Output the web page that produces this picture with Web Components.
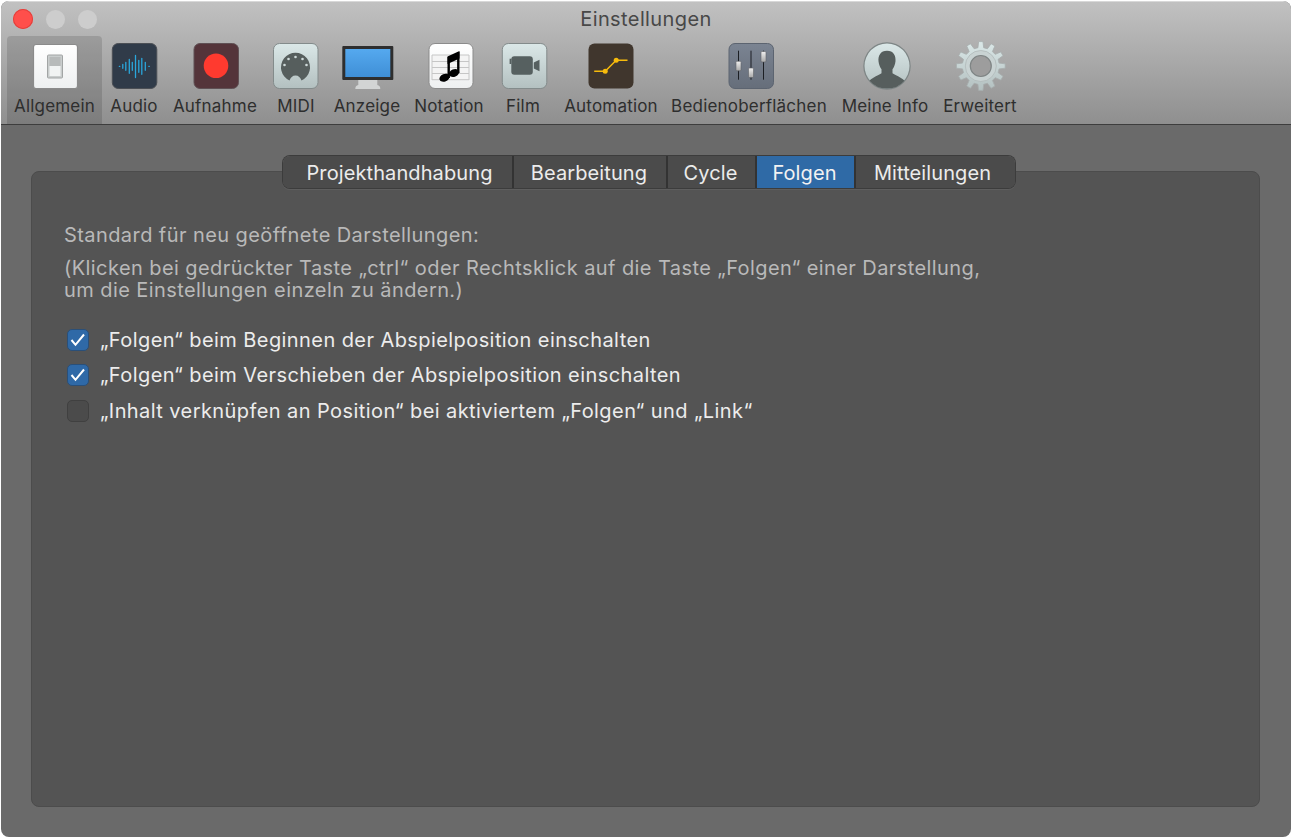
<!DOCTYPE html>
<html lang="de">
<head>
<meta charset="utf-8">
<title>Einstellungen</title>
<style>
    html, body { margin: 0; height: 100%; background: #fff; }
    body { font-family: Inter, "Liberation Sans", sans-serif; overflow: hidden; }
</style>
</head>
<body>
<pref-window heading="Einstellungen">
    <pref-tool slot="tools" label="Allgemein" w="95" active><pref-icon name="general" dx="-0.5"></pref-icon></pref-tool>
    <pref-tool slot="tools" label="Audio" w="64"><pref-icon name="audio" dx="0.3"></pref-icon></pref-tool>
    <pref-tool slot="tools" label="Aufnahme" w="98"><pref-icon name="record" dx="1"></pref-icon></pref-tool>
    <pref-tool slot="tools" label="MIDI" w="64"><pref-icon name="midi" dx="-0.5"></pref-icon></pref-tool>
    <pref-tool slot="tools" label="Anzeige" w="78"><pref-icon name="display" dx="1.3"></pref-icon></pref-tool>
    <pref-tool slot="tools" label="Notation" w="86"><pref-icon name="notation" dx="2"></pref-icon></pref-tool>
    <pref-tool slot="tools" label="Film" w="62"><pref-icon name="film" dx="1.3"></pref-icon></pref-tool>
    <pref-tool slot="tools" label="Automation" w="114"><pref-icon name="automation"></pref-icon></pref-tool>
    <pref-tool slot="tools" label="Bedienoberflächen" w="162"><pref-icon name="mixer" dx="2"></pref-icon></pref-tool>
    <pref-tool slot="tools" label="Meine Info" w="110"><pref-icon name="user" dx="1.5"></pref-icon></pref-tool>
    <pref-tool slot="tools" label="Erweitert" w="80"><pref-icon name="gear" dx="0.3"></pref-icon></pref-tool>

    <pref-tabs slot="tabs">
        <pref-tab w="231">Projekthandhabung</pref-tab>
        <pref-tab w="154">Bearbeitung</pref-tab>
        <pref-tab w="89">Cycle</pref-tab>
        <pref-tab w="99" selected>Folgen</pref-tab>
        <pref-tab w="159">Mitteilungen</pref-tab>
    </pref-tabs>

    <pref-panel>
        <span slot="title">Standard für neu geöffnete Darstellungen:</span>
        <span slot="note">(Klicken bei gedrückter Taste „ctrl“ oder Rechtsklick auf die Taste „Folgen“ einer Darstellung,<br>um die Einstellungen einzeln zu ändern.)</span>
        <pref-check checked>„Folgen“ beim Beginnen der Abspielposition einschalten</pref-check>
        <pref-check checked>„Folgen“ beim Verschieben der Abspielposition einschalten</pref-check>
        <pref-check>„Inhalt verknüpfen an Position“ bei aktiviertem „Folgen“ und „Link“</pref-check>
    </pref-panel>
</pref-window>

<script>
// gear outline, 12 teeth
function gearPath(cx, cy, rOut, rIn, teeth) {
    let d = '';
    const step = Math.PI * 2 / teeth;
    for (let i = 0; i < teeth; i++) {
        const a = i * step - Math.PI / 2;
        const pts = [
            [rIn, a - step * 0.30], [rOut, a - step * 0.17],
            [rOut, a + step * 0.17], [rIn, a + step * 0.30]
        ];
        pts.forEach((p, j) => {
            const x = (cx + p[0] * Math.cos(p[1])).toFixed(2);
            const y = (cy + p[0] * Math.sin(p[1])).toFixed(2);
            d += (i === 0 && j === 0 ? 'M' : 'L') + x + ' ' + y;
        });
    }
    return d + 'Z';
}

const ICONS = {
    general: `
        <rect x="1.5" y="2.5" width="44" height="44" rx="2.5" fill="url(#w)" stroke="#8b8b8b" stroke-width="1.2"/>
        <rect x="15.500" y="13" width="15" height="23" rx="1" fill="#c9cdcd" stroke="#a2a5a5"/>
        <rect x="17.500" y="15" width="11" height="9" fill="#b7baba"/>
        <rect x="17.500" y="24" width="11" height="10" fill="#f1f3f3"/>`,
    audio: `
        <rect x="0.5" y="1.5" width="44.5" height="45" rx="6" fill="#303b49" stroke="#4b4f55"/>
        <g stroke="#2aa7dc" stroke-width="1.3" stroke-linecap="round">
            <path d="M7.500 24.300h.5M11 22.300v4M14 20.300v8M17.500 17.300v14M20.500 20.300v8M23.700 13.500v22M27 18.300v12M30 16.300v16M33.500 20.300v8M37 24.300h.5"/>
        </g>`,
    record: `
        <rect x="0.5" y="1.5" width="44.5" height="45" rx="6" fill="#54343a" stroke="#5f5054"/>
        <circle cx="22.5" cy="23.700" r="12.300" fill="#ff3a2f"/>`,
    midi: `
        <rect x="0.5" y="1.5" width="44.5" height="45" rx="6" fill="url(#t)" stroke="#838b8b"/>
        <path d="M16.500 38.500A14.500 14.500 0 1 1 28.500 38.500C27.500 35.500 25.500 33.500 22.500 33.500S17.500 35.500 16.500 38.500z" fill="#565e5d"/>
        <g fill="#cfdada"><circle cx="22.500" cy="15" r="1.300"/><circle cx="15.500" cy="17" r="1.300"/><circle cx="29.500" cy="17" r="1.300"/><circle cx="11.500" cy="23" r="1.300"/><circle cx="33.500" cy="23" r="1.300"/></g>`,
    display: `
        <path d="M16 38h19v5c2 .6 3 1.200 3 4H13c0-2.800 1-3.400 3-4z" fill="#d2d4d4"/>
        <rect x="0" y="4" width="51" height="34" rx="1" fill="#2e2e2e"/>
        <rect x="3" y="7" width="45" height="28" fill="url(#b)"/>`,
    notation: `
        <rect x="0.5" y="1.5" width="44" height="45" rx="6" fill="url(#w)" stroke="#8b8b8b"/>
        <rect x="3.5" y="13" width="37" height="25" fill="#f4f4f4"/>
        <path d="M3.500 13h37M3.500 19.500h37M3.500 25.500h37M3.500 31.500h37M3.500 37.700h37M3.500 13v25M40.500 13v25" stroke="#c6c6c6" fill="none"/>
        <path d="M19 14.500L31 9V16.500L19 22z"/>
        <path d="M20.200 15v21M29.800 10v21" stroke="#000" stroke-width="2.400"/>
        <ellipse cx="16" cy="35.700" rx="5.300" ry="3.700" transform="rotate(-22 16 35.700)"/>
        <ellipse cx="25.600" cy="31" rx="5.300" ry="3.700" transform="rotate(-22 25.600 31)"/>`,
    film: `
        <rect x="0.5" y="1.5" width="44.5" height="45" rx="6" fill="url(#t)" stroke="#838b8b"/>
        <rect x="9.500" y="14.300" width="21.500" height="18.400" rx="3" fill="#566060"/>
        <path d="M32 20.500L37.700 17.700V29.300L32 26.500z" fill="#566060"/>
        <rect x="7.800" y="16.700" width="1.700" height="5.300" fill="#566060"/>`,
    automation: `
        <rect x="0" y="1.500" width="45" height="45" rx="6" fill="#40362d"/>
        <path d="M5.700 29.300h11l11-11h11.300" fill="none" stroke="#f7bb0c" stroke-width="1.500"/>
        <circle cx="16.700" cy="29.300" r="2.500" fill="#f7bb0c"/>
        <circle cx="27.700" cy="18.300" r="2.500" fill="#f7bb0c"/>`,
    mixer: `
        <rect x="0.5" y="1.5" width="44.500" height="45" rx="6" fill="url(#m)" stroke="#5c6470"/>
        <path d="M10 8.700v29M22.500 8.700v29M35 8.700v29" stroke="#1c1f24"/>
        <g fill="url(#k)" stroke="#5f6368" stroke-width=".6">
            <rect x="7.500" y="19.300" width="5" height="9.500" rx="1"/>
            <rect x="20" y="26" width="5" height="9.500" rx="1"/>
            <rect x="32.500" y="9.500" width="5" height="10.500" rx="1"/>
        </g>`,
    user: `
        <circle cx="23" cy="24" r="23.700" fill="#7d8585"/>
        <circle cx="23" cy="24" r="22.500" fill="url(#t)"/>
        <path d="M23 8.700c-6.500 0-9 5-8.500 10.500 .4 3.500 1.500 6 3 8v4c-3 2-8 3.500-12 7.500A22.500 22.500 0 0 0 23 46.500 22.500 22.500 0 0 0 40.500 38.700c-4-4-9-5.500-12-7.500v-4c1.500-2 2.600-4.500 3-8C32 13.700 29.500 8.700 23 8.700z" fill="#565e5d"/>`,
    gear: `
        <path d="${gearPath(23, 24, 24.5, 18.5, 12)}" fill="url(#t)" stroke="#a7adad" stroke-width=".8" stroke-linejoin="round"/>
        <circle cx="23" cy="24" r="15.500" fill="#c9d3d3" stroke="#aeb6b6" stroke-width=".7"/>
        <circle cx="23" cy="24" r="10.500" fill="#9d9d9d" stroke="#7f8585" stroke-width="1.200"/>`
};

const DEFS = `
    <defs>
        <linearGradient id="w" x1="0" y1="0" x2="0" y2="1"><stop offset="0" stop-color="#fff"/><stop offset="1" stop-color="#eef0f1"/></linearGradient>
        <linearGradient id="t" x1="0" y1="0" x2="0" y2="1"><stop offset="0" stop-color="#dbe8e8"/><stop offset="1" stop-color="#b3c0c0"/></linearGradient>
        <linearGradient id="b" x1="0" y1="0" x2="0" y2="1"><stop offset="0" stop-color="#55a9ef"/><stop offset="1" stop-color="#3f8fd6"/></linearGradient>
        <linearGradient id="m" x1="0" y1="0" x2="0" y2="1"><stop offset="0" stop-color="#7b8492"/><stop offset="1" stop-color="#666e7a"/></linearGradient>
        <linearGradient id="k" x1="0" y1="0" x2="0" y2="1"><stop offset="0" stop-color="#f0f0f0"/><stop offset="1" stop-color="#a8a8a8"/></linearGradient>
    </defs>`;

class PrefIcon extends HTMLElement {
    connectedCallback() {
        if (this.shadowRoot) return;
        const name = this.getAttribute('name');
        const dx = parseFloat(this.getAttribute('dx') || '0');
        const minX = (name === 'display' ? 0 : -3.5) - dx;
        this.attachShadow({ mode: 'open' }).innerHTML = `
            <style>
                :host { display: block; width: 52px; height: 48px; }
                svg { display: block; overflow: visible; }
            </style>
            <svg width="52" height="48" viewBox="${minX} 0 52 48">${DEFS}${ICONS[name]}</svg>`;
    }
}

class PrefTool extends HTMLElement {
    connectedCallback() {
        if (this.shadowRoot) return;
        this.attachShadow({ mode: 'open' }).innerHTML = `
            <style>
                :host {
                    display: flex;
                    flex-direction: column;
                    align-items: center;
                    flex: none;
                    width: ${this.getAttribute('w')}px;
                    height: 88px;
                    padding-top: 6px;
                    box-sizing: border-box;
                    border-radius: 4px 4px 0 0;
                }
                :host([active]) { background: rgba(0, 0, 0, 0.13); }
                .label {
                    margin-top: 5px;
                    font-size: 17px;
                    line-height: 22px;
                    letter-spacing: 0.2px;
                    color: #2e2e2e;
                    white-space: nowrap;
                }
            </style>
            <slot></slot>
            <div class="label">${this.getAttribute('label')}</div>`;
    }
}

class PrefTab extends HTMLElement {
    connectedCallback() {
        if (this.shadowRoot) return;
        this.attachShadow({ mode: 'open' }).innerHTML = `
            <style>
                :host {
                    display: flex;
                    align-items: center;
                    justify-content: center;
                    flex: none;
                    box-sizing: border-box;
                    width: ${this.getAttribute('w')}px;
                    height: 100%;
                    padding: 1px 2px 0 0;
                    font-size: 20px;
                    letter-spacing: 0.1px;
                    color: #ececec;
                    background: #4b4b4b;
                    border-right: 2px solid #333;
                }
                :host(:last-child) { border-right: 0; border-radius: 0 7px 7px 0; padding-right: 6px; }
                :host(:first-child) { border-radius: 7px 0 0 7px; padding-left: 6px; }
                :host([selected]) { background: #2f6aa6; color: #f2f2f2; }
            </style>
            <slot></slot>`;
    }
}

class PrefTabs extends HTMLElement {
    constructor() {
        super();
        this.attachShadow({ mode: 'open' }).innerHTML = `
            <style>
                :host {
                    display: flex;
                    height: 32px;
                    width: 732px;
                    border-radius: 7px;
                    box-shadow: 0 0 0 1px #3c3c3c, 0 1px 0 1px rgba(255, 255, 255, 0.06);
                }
            </style>
            <slot></slot>`;
    }
}

class PrefCheck extends HTMLElement {
    connectedCallback() {
        if (this.shadowRoot) return;
        const checked = this.hasAttribute('checked');
        this.attachShadow({ mode: 'open' }).innerHTML = `
            <style>
                :host {
                    display: flex;
                    align-items: center;
                    height: 35.5px;
                    padding-left: 3px;
                    font-size: 20px;
                    letter-spacing: 0.42px;
                    color: #ececec;
                    white-space: nowrap;
                }
                .box {
                    flex: none;
                    width: 22px;
                    height: 22px;
                    margin-right: 11px;
                    box-sizing: border-box;
                    border-radius: 5px;
                    background: #4b4b4b;
                    border: 1px solid #404040;
                }
                .box.on { background: #2f69a7; border-color: #2a4f78; }
                svg { display: block; }
            </style>
            <span class="box ${checked ? 'on' : ''}">
                ${checked ? '<svg width="20" height="20" viewBox="0 0 20 20"><path d="M3.500 10l4 4.800 8.500-10.300" fill="none" stroke="#fff" stroke-width="2"/></svg>' : ''}
            </span>
            <slot></slot>`;
    }
}

class PrefPanel extends HTMLElement {
    constructor() {
        super();
        this.attachShadow({ mode: 'open' }).innerHTML = `
            <style>
                :host {
                    display: block;
                    box-sizing: border-box;
                    width: 1229px;
                    height: 636px;
                    margin: -17px 0 0 30px;
                    padding: 51px 32px 0;
                    background: #545454;
                    border: 1px solid #4c4c4c;
                    border-radius: 8px;
                }
                .title, .note { color: #b9b9b9; font-size: 20px; letter-spacing: 0.42px; }
                .title { line-height: 24px; }
                .note { margin-top: 10px; line-height: 22px; }
                .rows { margin-top: 21px; }
            </style>
            <div class="title"><slot name="title"></slot></div>
            <div class="note"><slot name="note"></slot></div>
            <div class="rows"><slot></slot></div>`;
    }
}

class PrefWindow extends HTMLElement {
    constructor() {
        super();
        const template = document.createElement('template');
        template.innerHTML = `
            <style>
                :host {
                    display: flex;
                    flex-direction: column;
                    box-sizing: border-box;
                    width: 1290px;
                    height: 836px;
                    margin: 1px;
                    overflow: hidden;
                    border-radius: 8px;
                    background: #6a6a6a;
                }
                .bar {
                    flex: none;
                    box-sizing: border-box;
                    height: 124px;
                    background: linear-gradient(#c1c1c1, #8f8f8f);
                    border-top: 1px solid #d8d8d8;
                    border-bottom: 1px solid #3d3d3d;
                }
                .top {
                    display: grid;
                    grid-template-columns: 1fr auto 1fr;
                    align-items: center;
                    height: 34px;
                }
                .lights { display: flex; align-items: center; gap: 13px; padding-left: 12px; }
                .lights i { display: block; width: 19px; height: 19px; border-radius: 50%; background: #cdcdcd; }
                .lights i:first-child { width: 20px; height: 20px; background: #ff4f4b; box-shadow: inset 0 0 0 1px #e2403c; }
                h1 { margin: 0; font-size: 20px; font-weight: 400; letter-spacing: 0.4px; color: #484848; }
                .tools { display: flex; padding-left: 6px; }
                .body { flex: 1; min-height: 0; padding-top: 31px; }
                .tabs { display: flex; margin-left: 282px; position: relative; z-index: 1; }
            </style>
            <div class="bar">
                <div class="top">
                    <div class="lights"><i></i><i></i><i></i></div>
                    <h1></h1>
                    <div></div>
                </div>
                <div class="tools"><slot name="tools"></slot></div>
            </div>
            <div class="body">
                <div class="tabs"><slot name="tabs"></slot></div>
                <slot></slot>
            </div>
        `;
        this.attachShadow({ mode: 'open' }).appendChild(template.content.cloneNode(true));
    }
    connectedCallback() {
        this.shadowRoot.querySelector('h1').textContent = this.getAttribute('heading');
    }
}

customElements.define('pref-icon', PrefIcon);
customElements.define('pref-tool', PrefTool);
customElements.define('pref-tab', PrefTab);
customElements.define('pref-tabs', PrefTabs);
customElements.define('pref-check', PrefCheck);
customElements.define('pref-panel', PrefPanel);
customElements.define('pref-window', PrefWindow);
</script>
</body>
</html>
